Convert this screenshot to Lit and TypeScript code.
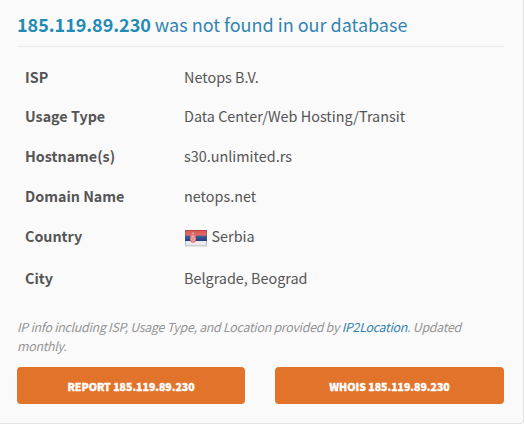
import { LitElement, html, css } from "lit";
import { customElement } from "lit/decorators.js";

const IP = "185.119.89.230";

@customElement("country-flag")
class CountryFlag extends LitElement {
  static styles = css`
    :host { display: block; width: 24px; height: 18px; }
    svg { display: block; }
  `;
  render() {
    return html`<svg width="24" height="18" viewBox="0 0 24 18">
      <defs>
        <linearGradient id="red" x1="0" y1="0" x2="0" y2="1">
          <stop offset="0" stop-color="#d9554f" /><stop offset="1" stop-color="#e0706a" />
        </linearGradient>
        <linearGradient id="blue" x1="0" y1="0" x2="0" y2="1">
          <stop offset="0" stop-color="#45609f" /><stop offset="1" stop-color="#243d7d" />
        </linearGradient>
      </defs>
      <rect x="1" y="16" width="22" height="1.4" fill="#b9b9be" opacity=".8" />
      <rect x="1" y="1" width="22" height="6" fill="url(#red)" />
      <rect x="1" y="6.6" width="22" height="5.4" fill="url(#blue)" />
      <rect x="1" y="12" width="22" height="4.2" fill="#e9e9ee" />
      <path d="M1 1.5H23" stroke="#b74747" />
      <path d="M1.5 1V16M22.5 1V16" stroke="#555b78" opacity=".35" />
      <path d="M6 5.2h6v5q0 3-3 3.6q-3-.6-3-3.6z" fill="#d9665f" />
      <path d="M9 5.5v7.5M7 6.5l1.3 1.5-1.3 2 1.2 2M11 6.5L9.7 8l1.3 2-1.2 2" fill="none" stroke="#f0cfce" stroke-width=".8" />
      <path d="M7.3 4.8q1.7-2.4 3.4 0z" fill="#e9b491" />
    </svg>`;
  }
}

@customElement("app-root")
class AppRoot extends LitElement {
  static styles = css`
    :host {
      display: block;
      width: 525px;
      height: 426px;
      overflow: hidden;
      background: #fff;
      color: #555;
      font-family: "Noto Sans CJK JP", "Noto Sans CJK SC", "Open Sans", sans-serif;
    }
    .card {
      box-sizing: border-box;
      width: 524px;
      height: 424px;
      padding: 5px 19px 0 17px;
      background: #fafafa;
      border-right: 1px solid #e3e3e3;
      border-bottom: 1px solid #e3e3e3;
      border-bottom-right-radius: 4px;
    }
    h3 {
      margin: 0;
      box-sizing: border-box;
      height: 42px;
      border-bottom: 1px solid #eaeaea;
      font-size: 18px;
      line-height: 39px;
      font-weight: 400;
      color: #3285b2;
      white-space: nowrap;
    }
    h3 b { color: #218ab5; letter-spacing: -0.04px; }
    dl {
      margin: 10px 0 0;
      padding: 0 8px;
      display: grid;
      grid-template-columns: 159px 1fr;
      grid-template-rows: 39px 40px 40px 40px 42px 42px;
      font-size: 14.4px;
    }
    dt, dd { margin: 0; line-height: 40px; white-space: nowrap; }
    dt { font-weight: 700; font-size: 14.3px; }
    dd { display: flex; }
    .country { gap: 3.5px; }
    country-flag { margin-top: 13px; }
    .note {
      margin: 18px 0 0;
      font-size: 12.4px;
      line-height: 19px;
      font-style: italic;
      letter-spacing: -0.28px;
      color: #959595;
    }
    a { color: #337fae; text-decoration: none; }
    .actions { margin-top: 11px; display: grid; grid-template-columns: 228px 229px; gap: 30px; }
    button {
      height: 37px;
      padding: 3px 0 0;
      border: 0;
      border-radius: 4px;
      background: #e2732a;
      color: #fff;
      font: 900 10.5px/34px "Noto Sans CJK JP", "Noto Sans CJK SC", sans-serif;
      -webkit-text-stroke: 0.35px #fff;
      white-space: nowrap;
    }
  `;
  render() {
    const rows = [
      ["ISP", "Netops B.V."],
      ["Usage Type", "Data Center/Web Hosting/Transit"],
      ["Hostname(s)", "s30.unlimited.rs"],
      ["Domain Name", "netops.net"],
      ["Country", "Serbia"],
      ["City", "Belgrade, Beograd"],
    ];
    return html`<div class="card">
      <h3><b>${IP}</b> was not found in our database</h3>
      <dl>
        ${rows.map(([k, v]) => html`<dt>${k}</dt>
          ${k === "Country"
            ? html`<dd class="country"><country-flag></country-flag><span>${v}</span></dd>`
            : html`<dd>${v}</dd>`}`)}
      </dl>
      <p class="note">IP info including ISP, Usage Type, and Location provided by <a>IP2Location</a>. Updated<br />monthly.</p>
      <div class="actions">
        <button>REPORT ${IP}</button>
        <button>WHOIS ${IP}</button>
      </div>
    </div>`;
  }
}
